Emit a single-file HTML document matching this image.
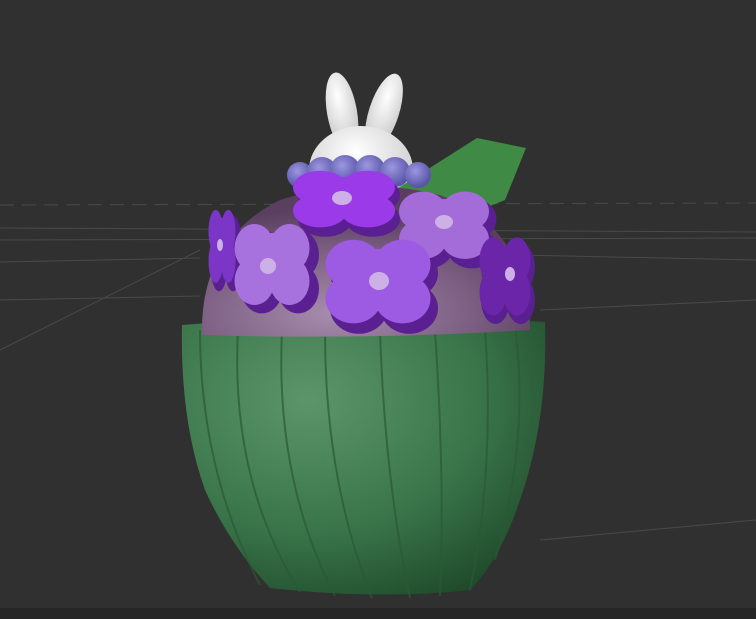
<!DOCTYPE html>
<html><head><style>html,body{margin:0;padding:0;background:#303030;overflow:hidden}svg{display:block}</style></head><body>
<svg width="756" height="619" viewBox="0 0 756 619" xmlns="http://www.w3.org/2000/svg">
<defs>
<radialGradient id="cup" cx="0.35" cy="0.3" r="0.85"><stop offset="0" stop-color="#5c956a"/><stop offset="0.55" stop-color="#3a754a"/><stop offset="1" stop-color="#1c4527"/></radialGradient>
<radialGradient id="dome" cx="0.4" cy="0.85" r="0.7"><stop offset="0" stop-color="#a78cad"/><stop offset="0.6" stop-color="#7c5f82"/><stop offset="1" stop-color="#5a3f60"/></radialGradient>
<radialGradient id="bun" cx="0.45" cy="0.3" r="0.7"><stop offset="0" stop-color="#ffffff"/><stop offset="1" stop-color="#c8c8c8"/></radialGradient>
<radialGradient id="bead" cx="0.4" cy="0.35" r="0.6"><stop offset="0" stop-color="#9c97e0"/><stop offset="1" stop-color="#5a55a8"/></radialGradient>
<g id="fl"><circle cx="-14" cy="-10" r="16"/><circle cx="14" cy="-10" r="16"/><circle cx="-14" cy="12" r="16"/><circle cx="14" cy="12" r="16"/><circle cx="0" cy="0" r="20"/></g>
</defs>
<rect width="756" height="619" fill="#303030"/>
<rect y="608" width="756" height="11" fill="#262626"/>
<g stroke="#4a4a4a" stroke-width="1" fill="none">
<line x1="0" y1="205" x2="756" y2="203" stroke-dasharray="14 8"/>
<line x1="0" y1="228" x2="756" y2="232"/><line x1="0" y1="240" x2="756" y2="238"/>
<line x1="0" y1="262" x2="200" y2="258"/><line x1="520" y1="255" x2="756" y2="260"/>
<line x1="0" y1="300" x2="200" y2="296"/><line x1="0" y1="350" x2="200" y2="250"/>
<line x1="540" y1="540" x2="756" y2="520"/><line x1="540" y1="310" x2="756" y2="300"/>
</g>
<ellipse cx="342" cy="112" rx="15" ry="40" fill="url(#bun)" transform="rotate(-10 342 112)"/>
<ellipse cx="384" cy="112" rx="15" ry="40" fill="url(#bun)" transform="rotate(18 384 112)"/>
<ellipse cx="361" cy="170" rx="52" ry="44" fill="url(#bun)"/>
<polygon points="395,190 477,138 526,148 505,200 480,210 430,205" fill="#3f8a45"/>
<g fill="url(#bead)"><circle cx="300" cy="175" r="13"/><circle cx="322" cy="172" r="15"/><circle cx="345" cy="170" r="15"/><circle cx="370" cy="170" r="15"/><circle cx="395" cy="172" r="15"/><circle cx="418" cy="175" r="13"/></g>
<path d="M182 325 Q365 310 545 322 Q548 420 520 500 Q500 560 470 590 Q380 600 270 588 Q230 545 205 490 Q180 420 182 325Z" fill="url(#cup)"/>
<g stroke="#2a5a35" stroke-width="2" fill="none" opacity="0.7">
<path d="M200 330 Q200 470 260 585"/><path d="M238 330 Q230 480 300 592"/><path d="M282 330 Q275 480 335 596"/><path d="M325 332 Q325 480 372 598"/><path d="M380 332 Q385 480 410 598"/><path d="M435 330 Q445 480 440 596"/><path d="M485 328 Q495 470 470 590"/><path d="M515 326 Q530 440 495 560"/>
</g>
<path d="M202 335 Q200 240 280 200 Q360 175 440 195 Q530 230 530 330 Q365 340 202 335Z" fill="url(#dome)"/>
<g fill="#5a1f90">
<use href="#fl" transform="translate(349 206) scale(1.7 1.1)"/>
<use href="#fl" transform="translate(450 232) scale(1.55 1.3)"/>
<use href="#fl" transform="translate(280 270) scale(1.3 1.55)"/>
<use href="#fl" transform="translate(384 289) scale(1.8 1.6)"/>
<use href="#fl" transform="translate(508 282) scale(0.9 1.5)"/>
<use href="#fl" transform="translate(226 252) scale(0.5 1.4)"/>
</g>
<use href="#fl" fill="#9a3ae8" transform="translate(344 198) scale(1.7 1.05)"/>
<use href="#fl" fill="#a36cd8" transform="translate(444 224) scale(1.5 1.25)"/>
<use href="#fl" fill="#a771de" transform="translate(272 263) scale(1.25 1.5)"/>
<use href="#fl" fill="#9d5ae2" transform="translate(378 280) scale(1.75 1.55)"/>
<use href="#fl" fill="#6a25a8" transform="translate(505 275) scale(0.85 1.45)"/>
<use href="#fl" fill="#7b36c8" transform="translate(222 245) scale(0.45 1.35)"/>
<g fill="#cdb0e8"><ellipse cx="342" cy="198" rx="10" ry="7"/><ellipse cx="444" cy="222" rx="9" ry="7"/><ellipse cx="268" cy="266" rx="8" ry="8"/><ellipse cx="379" cy="281" rx="10" ry="9"/><ellipse cx="510" cy="274" rx="5" ry="7"/><ellipse cx="220" cy="245" rx="3" ry="6"/></g>
</svg>
</body></html>
